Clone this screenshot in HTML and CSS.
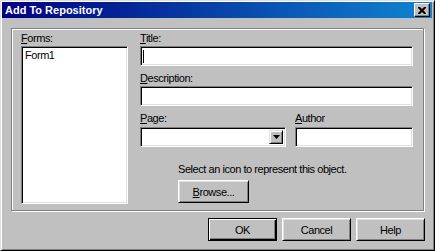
FILE: index.html
```html
<!DOCTYPE html>
<html lang="en">
<head>
    <meta charset="UTF-8">
    <title>Add To Repository</title>
    <link rel="stylesheet" href="styles.css">
</head>
<body>
    <div class="window">
        <div class="titlebar">
            <span class="title">Add To Repository</span>
            <div class="close-btn">
                <svg width="8" height="7" viewBox="0 0 8 7">
                    <path d="M0 0h2l2 2 2-2h2v1l-2.5 2.5L8 6v1H6L4 5 2 7H0V6l2.5-2.5L0 1z" fill="#000"/>
                </svg>
            </div>
        </div>

        <!-- main panel -->
        <div class="panel">
            <div class="left-col">
                <label class="lbl"><u>F</u>orms:</label>
                <div class="listbox">
                    <div class="list-item">Form1</div>
                </div>
            </div>

            <div class="right-col">
                <label class="lbl"><u>T</u>itle:</label>
                <div class="field"><span class="caret"></span></div>

                <label class="lbl lbl-gap"><u>D</u>escription:</label>
                <div class="field"></div>

                <div class="row">
                    <div class="page-group">
                        <label class="lbl"><u>P</u>age:</label>
                        <div class="field combo">
                            <div class="combo-btn">
                                <svg width="7" height="4" viewBox="0 0 7 4"><path d="M0 0h7L3.5 4z" fill="#000"/></svg>
                            </div>
                        </div>
                    </div>
                    <div class="author-group">
                        <label class="lbl"><u>A</u>uthor</label>
                        <div class="field"></div>
                    </div>
                </div>

                <div class="icon-area">
                    <p class="hint">Select an icon to represent this object.</p>
                    <div class="btn browse"><u>B</u>rowse...</div>
                </div>
            </div>
        </div>

        <div class="footer">
            <div class="btn default">OK</div>
            <div class="btn">Cancel</div>
            <div class="btn">Help</div>
        </div>
    </div>
</body>
</html>
```

FILE: styles.css
```css
body {
    margin: 0;
    padding: 0;
    background: #c0c0c0;
    font-family: "Liberation Sans", Arial, sans-serif;
    font-size: 11px;
    letter-spacing: -0.45px;
    color: #000;
}

.window {
    width: 435px;
    height: 251px;
    box-sizing: border-box;
    background: #c0c0c0;
    border: 1px solid;
    border-color: #dfdfdf #000 #000 #dfdfdf;
    box-shadow: inset 1px 1px #fff, inset -1px -1px #808080;
    padding: 1px 2px 2px 1px;
}

.titlebar {
    height: 16px;
    display: flex;
    align-items: center;
    justify-content: space-between;
    padding: 0 2px 0 3px;
    background: linear-gradient(to right, #000080, #1084d0);
}

.title {
    color: #fff;
    font-weight: bold;
    font-size: 11px;
    letter-spacing: 0;
}

.close-btn {
    width: 14px;
    height: 12px;
    display: flex;
    align-items: center;
    justify-content: center;
    background: #c0c0c0;
    border: 1px solid;
    border-color: #fff #000 #000 #fff;
    box-shadow: inset -1px -1px #808080;
}

.panel {
    margin: 10px 8px 0 9px;
    height: 183px;
    border: 1px solid #808080;
    box-shadow: inset 1px 1px #fff, 1px 1px #fff;
    display: flex;
    gap: 12px;
    padding: 3px 0 0 9px;
    box-sizing: border-box;
}

.lbl {
    display: block;
    height: 13px;
    line-height: 13px;
}

.left-col {
    width: 107px;
    display: flex;
    flex-direction: column;
}

.listbox {
    margin-top: 1px;
    height: 158px;
    background: #fff;
    border: 1px solid;
    border-color: #808080 #fff #fff #808080;
    box-shadow: inset 1px 1px #000, inset -1px -1px #dfdfdf;
    box-sizing: border-box;
    padding: 2px 3px;
}

.list-item {
    line-height: 13px;
}

.right-col {
    width: 273px;
}

.field {
    margin-top: 1px;
    height: 20px;
    background: #fff;
    border: 1px solid;
    border-color: #808080 #fff #fff #808080;
    box-shadow: inset 1px 1px #000, inset -1px -1px #dfdfdf;
    box-sizing: border-box;
    position: relative;
}

.caret {
    position: absolute;
    left: 2px;
    top: 3px;
    width: 1px;
    height: 13px;
    background: #000;
}

.lbl-gap {
    margin-top: 6px;
}

.row {
    display: flex;
    gap: 9px;
    margin-top: 6px;
}

.page-group {
    width: 146px;
}

.page-group .field {
    margin-top: 2px;
}

.author-group {
    flex: 1;
}

.author-group .field {
    margin-top: 2px;
}

.combo {
    display: flex;
    justify-content: flex-end;
    padding: 2px;
}

.combo-btn {
    width: 14px;
    height: 14px;
    display: flex;
    align-items: center;
    justify-content: center;
    background: #c0c0c0;
    border: 1px solid;
    border-color: #dfdfdf #000 #000 #dfdfdf;
    box-shadow: inset 1px 1px #fff, inset -1px -1px #808080;
    box-sizing: border-box;
}

.icon-area {
    margin-left: 38px;
    margin-top: 16px;
}

.hint {
    margin: 0;
    line-height: 13px;
}

.btn {
    height: 23px;
    box-sizing: border-box;
    display: flex;
    align-items: center;
    justify-content: center;
    background: #c0c0c0;
    border: 1px solid;
    border-color: #fff #000 #000 #fff;
    box-shadow: inset 1px 1px #dfdfdf, inset -1px -1px #808080;
}

.browse {
    width: 71px;
    margin-top: 4px;
}

.footer {
    display: flex;
    justify-content: flex-end;
    gap: 5px;
    margin-top: 7px;
    padding-right: 7px;
}

.footer .btn {
    width: 69px;
}

.btn.default {
    border: 1px solid #000;
    box-shadow: inset 1px 1px #fff, inset -1px -1px #000, inset -2px -2px #808080;
}
```
